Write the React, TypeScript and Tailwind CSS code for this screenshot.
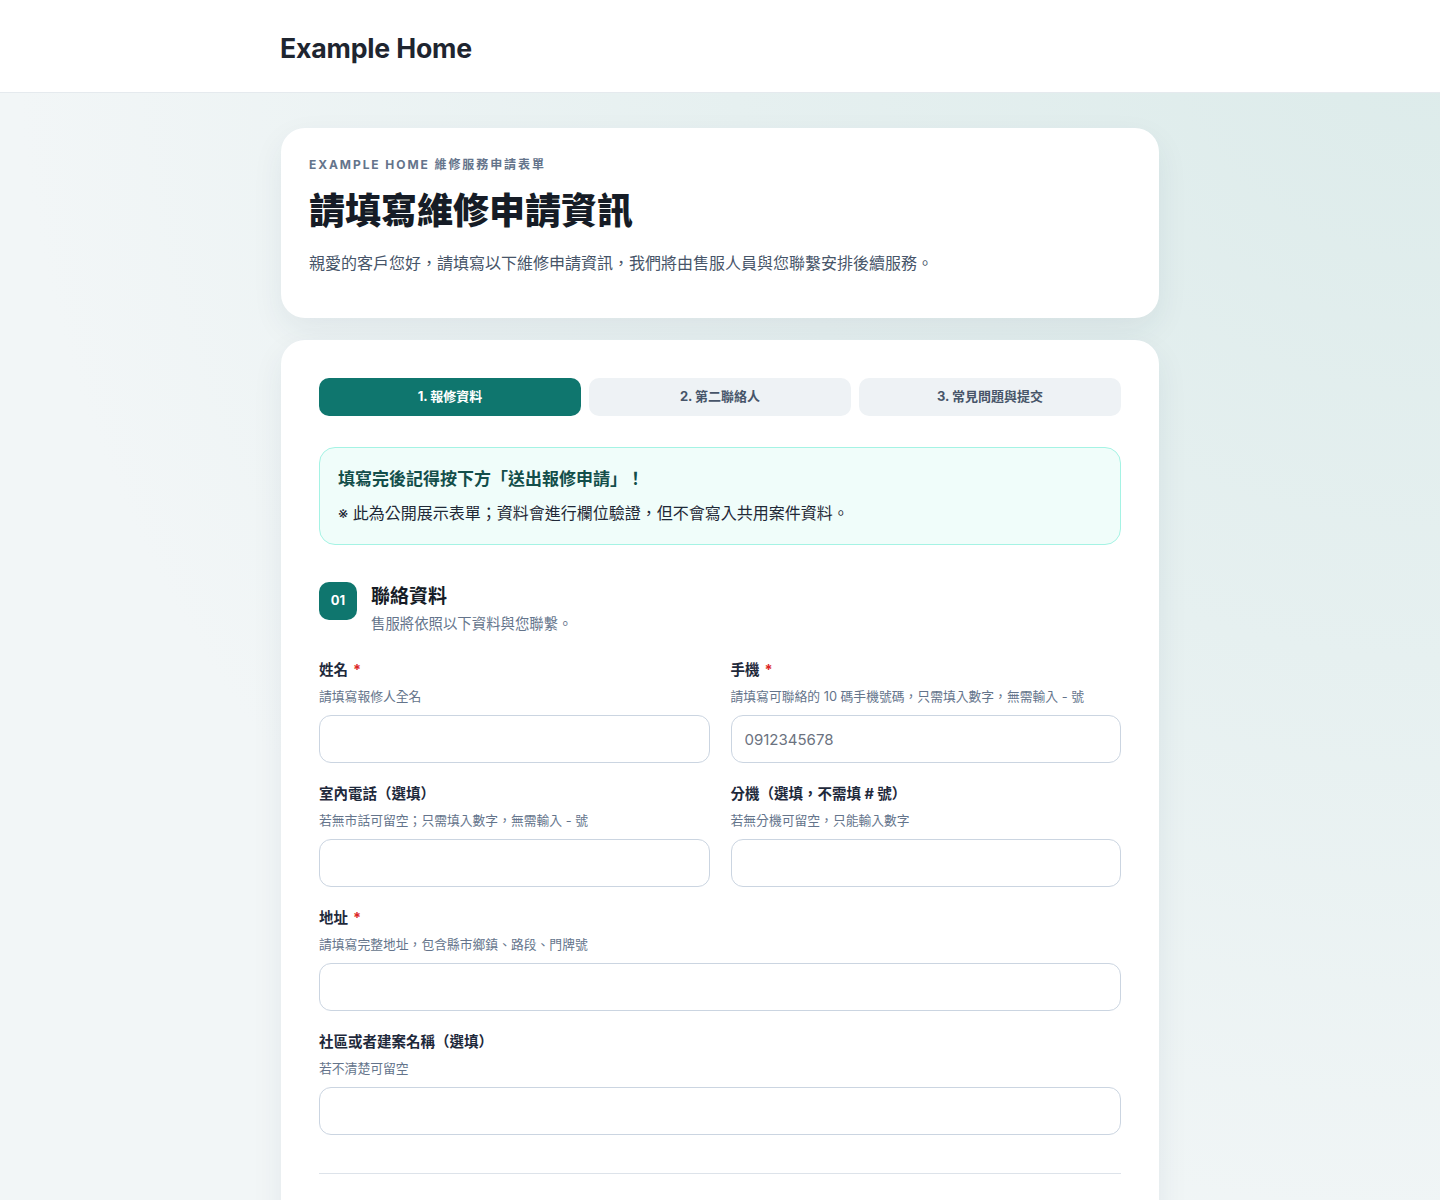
import { FC, ReactNode } from "react";

const fontStack = "font-['Inter','Noto_Sans_CJK_TC',sans-serif]";

interface FieldProps {
    label: string;
    hint: string;
    required?: boolean;
    placeholder?: string;
    className?: string;
}

const Field: FC<FieldProps> = ({ label, hint, required, placeholder, className }) => (
    <div className={`flex flex-col ${className ?? ""}`}>
        <label className="text-[14.5px] leading-5 font-bold text-[#1e293b]">
            {label}
            {required && <span className="ml-[5px] text-[#dc2626]">*</span>}
        </label>
        <p className="mt-[7px] text-[12.8px] leading-5 text-[#64748b]">{hint}</p>
        <input
            className="mt-2 h-[48px] w-full rounded-[12px] border border-[#cbd5e1] bg-white px-[13px] text-[15px] text-[#1e293b] placeholder:text-[#6b7280] outline-none"
            placeholder={placeholder}
        />
    </div>
);

const Card: FC<{ children: ReactNode; className?: string }> = ({ children, className }) => (
    <div className={`rounded-[24px] bg-white shadow-[0_12px_32px_rgba(30,60,80,0.07)] ${className ?? ""}`}>
        {children}
    </div>
);

const tabs = ["1. 報修資料", "2. 第二聯絡人", "3. 常見問題與提交"];

export default function App() {
    return (
        <div
            className={`min-h-[1200px] bg-[#f2f6f7] bg-[radial-gradient(ellipse_at_top_right,#dcebea_0%,#e6f0f0_35%,transparent_70%)] ${fontStack}`}
        >
            <header className="h-[93px] border-b border-[#e5eaee] bg-white">
                <div className="mx-auto flex h-full w-[880px] items-center pt-[4px]">
                    <h1 className="text-[26.7px] font-bold tracking-[-0.2px] text-[#1e2530]">Example Home</h1>
                </div>
            </header>

            <main className="mx-auto flex w-[878px] flex-col gap-[22px] pt-[35px] pb-10">
                <Card className="px-[28px] pt-[29px] pb-[43px]">
                    <p className="text-[12px] leading-4 font-bold tracking-[0.16em] text-[#64748b]">
                        EXAMPLE HOME 維修服務申請表單
                    </p>
                    <h2 className="mt-[16px] text-[36px] leading-[44px] font-black text-[#161c26]">請填寫維修申請資訊</h2>
                    <p className="mt-[18px] text-[16px] leading-6 text-[#475569]">
                        親愛的客戶您好，請填寫以下維修申請資訊，我們將由售服人員與您聯繫安排後續服務。
                    </p>
                </Card>

                <Card className="px-[38px] pt-[38px] pb-10">
                    <div className="grid grid-cols-3 gap-2">
                        {tabs.map((tab, index) => (
                            <button
                                key={index}
                                className={`h-[38px] rounded-[10px] text-[13px] font-bold ${
                                    index === 0 ? "bg-[#0f766e] text-white" : "bg-[#eef2f5] text-[#475569]"
                                }`}
                            >
                                {tab}
                            </button>
                        ))}
                    </div>

                    <div className="mt-[31px] rounded-[16px] border border-[#a5f3e4] bg-[#f0fdfa] px-[18px] pt-[19px] pb-[19px]">
                        <p className="text-[17px] leading-6 font-bold text-[#134e4a]">填寫完後記得按下方「送出報修申請」！</p>
                        <p className="mt-[10px] text-[16px] leading-6 text-[#1f2937]">
                            ※ 此為公開展示表單；資料會進行欄位驗證，但不會寫入共用案件資料。
                        </p>
                    </div>

                    <div className="mt-[37px] flex gap-[14px]">
                        <div className="flex h-[38px] w-[38px] shrink-0 items-center justify-center rounded-[10px] bg-[#0f766e] text-[13px] font-bold text-white">
                            01
                        </div>
                        <div className="flex flex-col pt-[1px]">
                            <h3 className="text-[19px] leading-7 font-bold text-[#161c26]">聯絡資料</h3>
                            <p className="mt-[3px] text-[14.4px] leading-5 text-[#64748b]">售服將依照以下資料與您聯繫。</p>
                        </div>
                    </div>

                    <div className="mt-[26px] grid grid-cols-2 gap-x-[21px] gap-y-[21px]">
                        <Field label="姓名" required hint="請填寫報修人全名" />
                        <Field
                            label="手機"
                            required
                            hint="請填寫可聯絡的 10 碼手機號碼，只需填入數字，無需輸入 - 號"
                            placeholder="0912345678"
                        />
                        <Field label="室內電話（選填）" hint="若無市話可留空；只需填入數字，無需輸入 - 號" />
                        <Field label="分機（選填，不需填 # 號）" hint="若無分機可留空，只能輸入數字" />
                        <Field
                            label="地址"
                            required
                            hint="請填寫完整地址，包含縣市鄉鎮、路段、門牌號"
                            className="col-span-2"
                        />
                        <Field label="社區或者建案名稱（選填）" hint="若不清楚可留空" className="col-span-2" />
                    </div>

                    <div className="mt-[38px] border-t border-[#dde3ea]" />
                    <div className="h-20" />
                </Card>
            </main>
        </div>
    );
}
